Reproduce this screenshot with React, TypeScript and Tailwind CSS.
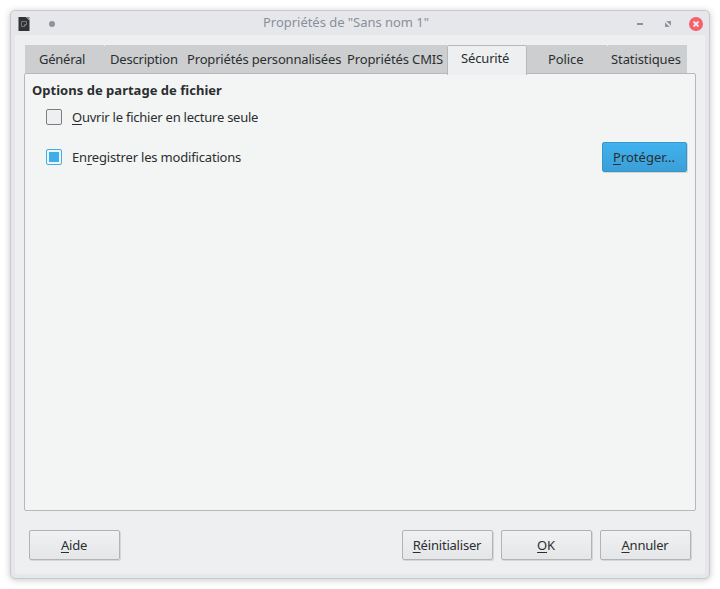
import React from 'react';

const tabs = [
  { label: 'Général', box: 'w-20 pl-[14px]', text: 'tracking-[-0.25px]' },
  { label: 'Description', box: 'w-[77px] pl-[5px]', text: 'tracking-[-0.2px]', notch: '-left-px' },
  { label: 'Propriétés personnalisées', box: 'w-[161px] pl-[5px]', text: 'tracking-[-0.17px]' },
  { label: 'Propriétés CMIS', box: 'w-[104px] pl-1', text: 'tracking-[-0.13px]' },
  { label: 'Sécurité', box: 'w-20 pl-[13px]', text: 'tracking-[-0.15px]', active: true },
  { label: 'Police', box: 'w-[79px] pl-[21px]', text: 'tracking-[-0.1px]' },
  { label: 'Statistiques', box: 'w-[81px] pl-[5px]', text: 'tracking-[-0.1px]', notch: 'left-px' },
];

function Mnemonic({ children }: { children: React.ReactNode }) {
  return (
    <span className="underline decoration-1 underline-offset-2 [text-decoration-skip-ink:none]">{children}</span>
  );
}

function DialogButton({ hot, rest, className = '' }: { hot: string; rest: string; className?: string }) {
  return (
    <button
      className={`flex h-[30px] w-[91px] items-center justify-center rounded-[2px] border border-[#b1b3b5] bg-linear-to-b from-[#f0f1f3] to-[#e5e6e8] pr-px shadow-[1px_1px_0_#d5d6d8] ${className}`}
    >
      <span>
        <Mnemonic>{hot}</Mnemonic>
        {rest}
      </span>
    </button>
  );
}

function TitleBar() {
  return (
    <header className="flex h-6 items-start pt-[6px] text-[#8b8e9a]">
      <svg className="ml-[7px] h-[14px] w-3 shrink-0" viewBox="0 0 12 14">
        <path d="M0.5 0H8L11.5 3.5V14H0.5Z" fill="#303236" />
        <path d="M8 0h3.5v3.5z" fill="#85888c" />
        <path d="M3.5 4.5h5v3L6.5 9.5h-3z" fill="none" stroke="#85888c" strokeWidth="0.8" />
        <path d="M8.5 7.5h-2v2" fill="none" stroke="#85888c" strokeWidth="0.7" />
      </svg>
      <span className="mt-1 ml-[19px] size-[6px] shrink-0 rounded-full bg-[#8e939e]" />
      <h1 className="-mt-1 ml-[208px] w-[167px] shrink-0 leading-[18px] font-normal tracking-[-0.03px] whitespace-nowrap">
        Propriétés de "Sans nom 1"
      </h1>
      <span className="mt-[6px] ml-[207px] h-[2px] w-[6px] shrink-0 bg-[#8e939e]" />
      <svg className="mt-1 ml-[22px] size-[6px] shrink-0" viewBox="0 0 6 6" fill="#8e939e">
        <path d="M1.3 0H6v4.7zM0 1.3V6h4.7z" />
      </svg>
      <svg className="ml-[18px] size-[14px] shrink-0" viewBox="0 0 14 14">
        <circle cx="7" cy="7" r="7" fill="#f6606b" />
        <path d="M4.5 4.5l5 5M9.5 4.5l-5 5" stroke="#f4e7ea" strokeWidth="1.9" />
      </svg>
    </header>
  );
}

export default function App() {
  return (
    <div className="h-[589px] w-[720px] overflow-hidden bg-white p-[10px] font-['Noto_Sans',sans-serif] text-[13px] leading-[18px] text-[#2b2e30]">
      <div className="h-[569px] w-[700px] rounded-[5px] border border-[#c9cacd] bg-[#e6e7eb] shadow-[0_1px_7px_rgba(0,0,0,0.22)]">
        <TitleBar />
        <main className="mx-1 h-[539px] bg-[#eeeff1] pt-[10px]">
          <nav className="relative ml-[10px] flex h-7 w-[662px] whitespace-nowrap">
            {tabs.map((tab) => (
              <div
                key={tab.label}
                className={`${tab.box} relative shrink-0 ${
                  tab.active
                    ? 'h-[30px] rounded-t-[2px] border border-b-0 border-[#b7b8ba] bg-[#eeeff1] pt-[3px]'
                    : 'h-7 bg-[#cdced0] pt-[5px]'
                }`}
              >
                {tab.notch && <span className={`absolute top-0 size-px bg-[#eeeff1] ${tab.notch}`} />}
                <span className={`block ${tab.text}`}>{tab.label}</span>
              </div>
            ))}
          </nav>
          <section className="ml-[9px] h-[438px] w-[672px] rounded-[2px] border border-[#b7b8ba] bg-[#f3f5f4] pt-[7px]">
            <h2 className="ml-[7px] leading-[18px] font-bold tracking-[0.02px]">Options de partage de fichier</h2>
            <label className="mt-[9px] ml-[21px] flex h-[18px] items-center">
              <span className="size-4 rounded-[2px] border border-[#7b7d80] bg-[#eeeff1]" />
              <span className="ml-[10px] tracking-[-0.24px]">
                <Mnemonic>O</Mnemonic>uvrir le fichier en lecture seule
              </span>
            </label>
            <div className="mt-4 mr-2 ml-[21px] flex h-[30px] items-center">
              <label className="flex items-center">
                <span className="flex size-4 items-center justify-center rounded-[2px] border border-[#3daee9] bg-[#f1f3f4]">
                  <span className="size-[10px] bg-[#3daee9]" />
                </span>
                <span className="ml-[10px] tracking-[-0.18px]">
                  En<Mnemonic>r</Mnemonic>egistrer les modifications
                </span>
              </label>
              <button className="ml-auto flex h-[30px] w-[85px] items-center justify-center rounded-[2px] border border-[#3496cb] bg-linear-to-b from-[#40b2ef] to-[#3b9fd7] pr-px shadow-[1px_1px_0_#d2d5d6]">
                <span>
                  <Mnemonic>P</Mnemonic>rotéger...
                </span>
              </button>
            </div>
          </section>
          <footer className="mt-[19px] mr-[14px] ml-[14px] flex gap-2 tracking-[-0.2px]">
            <DialogButton hot="A" rest="ide" className="mr-auto" />
            <DialogButton hot="R" rest="éinitialiser" />
            <DialogButton hot="O" rest="K" />
            <DialogButton hot="A" rest="nnuler" />
          </footer>
        </main>
      </div>
    </div>
  );
}
